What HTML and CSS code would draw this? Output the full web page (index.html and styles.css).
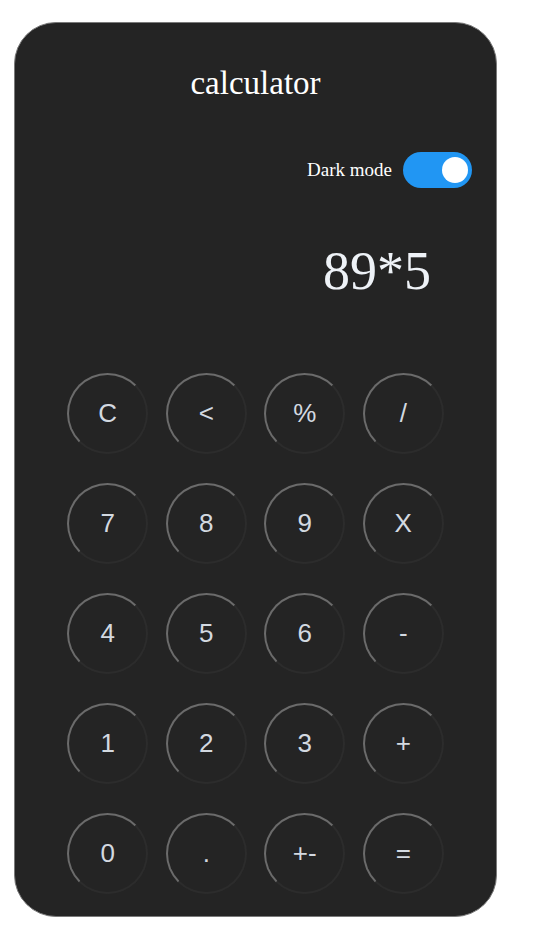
FILE: index.html
```html
<!DOCTYPE html>
<html>
<head>
<meta charset="utf-8">
<link rel="stylesheet" href="styles.css">
</head>
<body>
<div class="calc">
  <h1 class="title">calculator</h1>
  <div class="mode">
    <span class="mode-label">Dark mode</span>
    <span class="toggle"><span class="knob"></span></span>
  </div>
  <div class="display">89*5</div>
  <div class="keys">
    <button class="key">C</button>
    <button class="key">&lt;</button>
    <button class="key">%</button>
    <button class="key">/</button>
    <button class="key">7</button>
    <button class="key">8</button>
    <button class="key">9</button>
    <button class="key">X</button>
    <button class="key">4</button>
    <button class="key">5</button>
    <button class="key">6</button>
    <button class="key">-</button>
    <button class="key">1</button>
    <button class="key">2</button>
    <button class="key">3</button>
    <button class="key">+</button>
    <button class="key">0</button>
    <button class="key">.</button>
    <button class="key">+-</button>
    <button class="key">=</button>
  </div>
</div>
</body>
</html>
```

FILE: styles.css
```css
html, body {
  margin: 0;
  padding: 0;
  background: #ffffff;
}
.calc {
  box-sizing: border-box;
  width: 483px;
  height: 895px;
  margin: 22px 0 0 14px;
  background: #242424;
  border: 1px solid #7a7a7a;
  border-radius: 42px;
  display: flex;
  flex-direction: column;
  font-family: "Liberation Serif", "Times New Roman", serif;
  color: #ffffff;
}
.title {
  margin: 0;
  padding-top: 41px;
  font-weight: normal;
  font-size: 33px;
  line-height: 38px;
  text-align: center;
}
.mode {
  display: flex;
  justify-content: flex-end;
  align-items: center;
  gap: 11px;
  margin-top: 50px;
  padding-right: 24px;
}
.mode-label {
  font-size: 19px;
}
.toggle {
  box-sizing: border-box;
  width: 69px;
  height: 36px;
  border-radius: 18px;
  background: #2196f3;
  display: flex;
  align-items: center;
  justify-content: flex-end;
  padding-right: 4px;
}
.knob {
  width: 26px;
  height: 26px;
  border-radius: 50%;
  background: #ffffff;
}
.display {
  margin-top: 53px;
  padding-right: 65px;
  text-align: right;
  font-size: 54px;
  line-height: 60px;
  color: #eef2f7;
}
.keys {
  display: grid;
  grid-template-columns: repeat(4, 81px);
  column-gap: 17.5px;
  row-gap: 29px;
  justify-content: center;
  margin-top: 72px;
}
.key {
  box-sizing: border-box;
  width: 81px;
  height: 81px;
  border-radius: 50%;
  background: transparent;
  border: 2px solid #2c2c2c;
  border-top-color: #6b6b6b;
  border-left-color: #6b6b6b;
  font-family: "Liberation Sans", Arial, sans-serif;
  font-size: 26px;
  color: #d3d9e0;
  padding: 0;
}
```
